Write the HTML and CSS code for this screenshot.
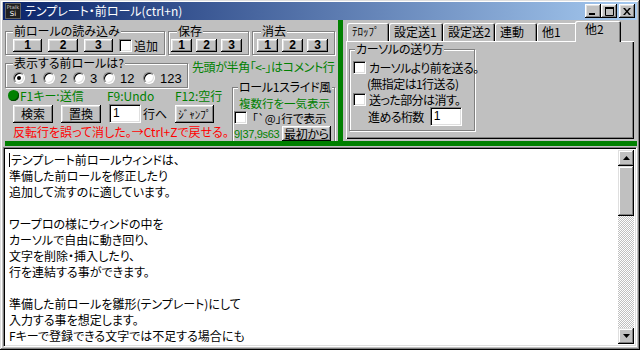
FILE: index.html
```html
<!DOCTYPE html>
<html lang="ja">
<head>
    <meta charset="UTF-8">
    <title>テンプレート・前ロール</title>
    <link rel="stylesheet" href="styles.css">
</head>
<body>
<div class="window">
    <div class="titlebar">
        <div class="app-icon"><span class="ic-top">Ptalk</span><span class="ic-bottom">Si</span></div>
        <span class="title">テンプレート・前ロール(ctrl+n)</span>
        <div class="caption-btns">
            <button class="cap">
                <svg width="8" height="7" viewBox="0 0 8 7"><rect x="0" y="5" width="6" height="2" fill="#000"/></svg>
            </button>
            <button class="cap">
                <svg width="9" height="9" viewBox="0 0 9 9"><path d="M0.5 1.5h8v7h-8z" fill="none" stroke="#000"/><rect x="0" y="0" width="9" height="2" fill="#000"/></svg>
            </button>
            <button class="cap close">
                <svg width="8" height="7" viewBox="0 0 8 7"><path d="M0 0h2l2 2.5 2-2.5h2l-3 3.5 3 3.5h-2l-2-2.5-2 2.5h-2l3-3.5z" fill="#000"/></svg>
            </button>
        </div>
    </div>

    <div class="top">
        <div class="left">
            <div class="row1">
                <fieldset class="group load">
                    <legend>前ロールの読み込み</legend>
                    <div class="ctrl-row">
                        <button class="btn num wide">1</button>
                        <button class="btn num wide">2</button>
                        <button class="btn num wide">3</button>
                        <span class="check"></span>
                        <span class="add-label">追加</span>
                    </div>
                </fieldset>
                <fieldset class="group save">
                    <legend>保存</legend>
                    <div class="ctrl-row small-gap">
                        <button class="btn num narrow">1</button>
                        <button class="btn num narrow">2</button>
                        <button class="btn num narrow">3</button>
                    </div>
                </fieldset>
                <fieldset class="group erase">
                    <legend>消去</legend>
                    <div class="ctrl-row small-gap">
                        <button class="btn num narrow">1</button>
                        <button class="btn num narrow">2</button>
                        <button class="btn num narrow">3</button>
                    </div>
                </fieldset>
            </div>

            <div class="mid">
                <fieldset class="group show">
                    <legend>表示する前ロールは?</legend>
                    <div class="radios">
                        <span class="opt"><span class="radio on"></span>1</span>
                        <span class="opt"><span class="radio"></span>2</span>
                        <span class="opt"><span class="radio"></span>3</span>
                        <span class="opt wide"><span class="radio"></span>12</span>
                        <span class="opt"><span class="radio"></span>123</span>
                    </div>
                </fieldset>
                <p class="note green">先頭が半角「&lt;-」はコメント行</p>

                <fieldset class="group slide">
                    <legend>ロール1スライド風</legend>
                    <p class="green slide-note">複数行を一気表示</p>
                    <div class="slide-check"><span class="check"></span>「`@」行で表示</div>
                    <div class="slide-bottom">
                        <span class="green stamp">9|37,9s63</span>
                        <button class="btn first">最初から</button>
                    </div>
                </fieldset>

                <div class="keys green">
                    <span class="key k1"><span class="dot"></span>F1キー:送信</span>
                    <span class="key k9">F9:Undo</span>
                    <span class="key">F12:空行</span>
                </div>
                <div class="tools">
                    <button class="btn tool">検索</button>
                    <button class="btn tool">置換</button>
                    <span class="field line-no">1</span>
                    <span class="goto">行へ</span>
                    <button class="btn tool jump">ｼﾞｬﾝﾌﾟ</button>
                </div>
                <p class="warn">反転行を誤って消した。→Ctrl+Zで戻せる。</p>
            </div>
        </div>

        <div class="vbar"></div>

        <div class="right">
            <div class="tab-strip">
                <span class="tab t1">ﾃﾛｯﾌﾟ</span>
                <span class="tab t2">設定送1</span>
                <span class="tab t3">設定送2</span>
                <span class="tab t4">連動</span>
                <span class="tab t5">他1</span>
                <span class="tab t6 active">他2</span>
            </div>
            <div class="tab-body">
                <fieldset class="group cursor">
                    <legend>カーソルの送り方</legend>
                    <div class="c-row"><span class="check"></span>カーソルより前を送る。</div>
                    <div class="c-row indent">(無指定は1行送る)</div>
                    <div class="c-row"><span class="check"></span>送った部分は消す。</div>
                    <div class="c-row digits">進める桁数<span class="field digit-box">1</span></div>
                </fieldset>
            </div>
        </div>
    </div>

    <div class="hbar"></div>

    <div class="editor">
        <div class="text"><span class="caret"></span>テンプレート前ロールウィンドは、
準備した前ロールを修正したり
追加して流すのに適しています。

ワープロの様にウィンドの中を
カーソルで自由に動き回り、
文字を削除・挿入したり、
行を連結する事ができます。

準備した前ロールを雛形(テンプレート)にして
入力する事を想定します。
Fキーで登録できる文字では不足する場合にも</div>
        <div class="scrollbar">
            <span class="sb-btn">
                <svg width="7" height="4" viewBox="0 0 7 4"><polygon points="3.5,0 7,4 0,4" fill="#000"/></svg>
            </span>
            <span class="sb-thumb"></span>
            <span class="sb-track"></span>
            <span class="sb-btn">
                <svg width="7" height="4" viewBox="0 0 7 4"><polygon points="0,0 7,0 3.5,4" fill="#000"/></svg>
            </span>
        </div>
    </div>
</div>
</body>
</html>
```

FILE: styles.css
```css
* {
    box-sizing: border-box;
}
body {
    margin: 0;
    background: #c0c0c0;
    font-family: "Noto Sans CJK JP", sans-serif;
    font-size: 12px;
    font-feature-settings: "palt";
    color: #000;
}
p {
    margin: 0;
}
button {
    font: inherit;
    color: #000;
    padding: 0;
    border: 0;
}
.window {
    width: 640px;
    height: 350px;
    padding: 2px 3px 3px 3px;
    background: #c0c0c0;
    display: flex;
    flex-direction: column;
    box-shadow: inset -1px -1px #000, inset 1px 1px #dfdfdf, inset -2px -2px #808080, inset 2px 2px #fff;
}

/* title bar */
.titlebar {
    height: 18px;
    display: flex;
    align-items: center;
    padding: 0 2px;
    background: linear-gradient(90deg, #0a246a, #a6caf0);
    color: #fff;
}
.app-icon {
    width: 16px;
    height: 16px;
    background: #202020;
    border: 1px solid #606060;
    display: flex;
    flex-direction: column;
    align-items: center;
    line-height: 7px;
    font-family: "DejaVu Sans", sans-serif;
    color: #ccc;
}
.ic-top {
    font-size: 5px;
}
.ic-bottom {
    font-size: 7px;
    color: #fff;
}
.title {
    margin-left: 4px;
    line-height: 18px;
}
.caption-btns {
    margin-left: auto;
    display: flex;
}
.cap {
    width: 16px;
    height: 14px;
    background: #c0c0c0;
    display: flex;
    align-items: center;
    justify-content: center;
    box-shadow: inset -1px -1px #000, inset 1px 1px #fff, inset -2px -2px #808080, inset 2px 2px #dfdfdf;
}
.cap.close {
    margin-left: 2px;
}

/* top area */
.top {
    height: 124px;
    display: flex;
    white-space: nowrap;
}
.left {
    width: 335px;
    padding: 5px 0 0 2px;
}
.vbar {
    width: 5px;
    background: #008000;
}
.right {
    flex: 1;
    padding: 0 3px 2px 3px;
    display: flex;
    flex-direction: column;
}
.hbar {
    height: 5px;
    margin-left: 2px;
    background: #008000;
}

/* group boxes */
.group {
    margin: 0;
    min-width: 0;
    padding: 0 6px 2px 7px;
    border: 1px solid #808080;
    box-shadow: inset 1px 1px #fff, 1px 1px #fff;
}
.group legend {
    padding: 0 1px;
    line-height: 12px;
    background: #c0c0c0;
}
.row1 {
    display: flex;
    gap: 3px;
}
.load {
    width: 160px;
}
.save {
    width: 81px;
    padding-left: 2px;
}
.save legend {
    margin-left: 6px;
}
.erase {
    width: 83px;
    padding-left: 4px;
}
.erase legend {
    margin-left: 4px;
}
.ctrl-row {
    display: flex;
    align-items: center;
    gap: 6px;
    height: 14px;
    margin-top: 1px;
}
.ctrl-row.small-gap {
    gap: 4px;
}
.add-label {
    margin-left: -4px;
}

/* controls */
.btn {
    background: #c0c0c0;
    box-shadow: inset -1px -1px #000, inset 1px 1px #fff, inset -2px -2px #808080, inset 2px 2px #dfdfdf;
}
.btn.num {
    height: 13px;
    font-family: "Liberation Sans", sans-serif;
    font-weight: bold;
    font-size: 12px;
    line-height: 13px;
}
.btn.wide {
    width: 30px;
}
.btn.narrow {
    width: 21px;
}
.check {
    display: inline-block;
    flex: none;
    width: 13px;
    height: 13px;
    background: #fff;
    border: 1px solid;
    border-color: #808080 #fff #fff #808080;
    box-shadow: inset 1px 1px #000, inset -1px -1px #dfdfdf;
}
.radio {
    flex: none;
    width: 12px;
    height: 12px;
    border-radius: 50%;
    background: #fff;
    border: 1px solid;
    border-color: #808080 #fff #fff #808080;
    box-shadow: inset 1px 1px #000, inset -1px -1px #dfdfdf;
    display: flex;
    align-items: center;
    justify-content: center;
}
.radio.on::after {
    content: '';
    width: 4px;
    height: 4px;
    border-radius: 50%;
    background: #000;
}
.field {
    background: #fff;
    border: 1px solid;
    border-color: #808080 #fff #fff #808080;
    box-shadow: inset 1px 1px #000, inset -1px -1px #dfdfdf;
    padding-left: 3px;
    line-height: 17px;
    font-family: "Liberation Sans", sans-serif;
}
.green {
    color: #008000;
}

/* middle grid */
.mid {
    margin-top: 2px;
    display: grid;
    grid-template-columns: 187px 40px 103px;
    grid-template-rows: 24px 7px 15px 21px 15px;
}
.show {
    grid-column: 1;
    grid-row: 1 / 3;
    width: 183px;
    padding-left: 7px;
}
.radios {
    display: flex;
    align-items: center;
    height: 16px;
    margin-top: 1px;
}
.opt {
    display: flex;
    align-items: center;
    gap: 5px;
    width: 30px;
    font-family: "Liberation Sans", sans-serif;
    font-size: 13px;
}
.opt.wide {
    width: 40px;
}
.note {
    grid-column: 1 / 4;
    grid-row: 1;
    margin-left: 187px;
    padding-top: 2px;
    line-height: 16px;
    letter-spacing: -0.4px;
}
.slide {
    grid-column: 3;
    grid-row: 2 / 6;
    width: 103px;
    height: 63px;
    padding: 0 2px 2px 1px;
    line-height: 14px;
}
.slide legend {
    margin-left: 4px;
    letter-spacing: -0.3px;
}
.slide-note {
    font-size: 11.5px;
    line-height: 14px;
    padding: 3px 0 0 5px;
}
.slide-check {
    display: flex;
    align-items: center;
    gap: 5px;
    height: 15px;
    font-size: 11.5px;
}
.slide-bottom {
    display: flex;
    align-items: center;
    height: 15px;
    margin-top: 1px;
}
.stamp {
    font-family: "Liberation Sans", sans-serif;
    font-size: 11px;
    width: 48px;
    letter-spacing: -0.3px;
}
.btn.first {
    height: 15px;
    width: 49px;
    line-height: 14px;
    letter-spacing: -0.3px;
}
.keys {
    grid-column: 1 / 3;
    grid-row: 3;
    display: flex;
    align-items: center;
    padding-left: 3px;
    line-height: 15px;
}
.key.k1 {
    width: 99px;
    display: flex;
    align-items: center;
    gap: 1px;
}
.key.k9 {
    width: 68px;
}
.dot {
    width: 11px;
    height: 11px;
    border-radius: 50%;
    background: #008000;
    box-shadow: inset -1px -1px #004000;
}
.tools {
    grid-column: 1 / 3;
    grid-row: 4;
    display: flex;
    align-items: center;
    padding-left: 8px;
}
.btn.tool {
    width: 40px;
    height: 18px;
    margin-right: 8px;
}
.line-no {
    width: 32px;
    height: 19px;
}
.goto {
    margin: 0 8px 0 2px;
}
.btn.jump {
    width: 39px;
    margin-right: 0;
    font-size: 11px;
}
.warn {
    grid-column: 1 / 3;
    grid-row: 5;
    padding-left: 8px;
    color: #f00;
    line-height: 15px;
}

/* tabs */
.tab-strip {
    height: 21px;
    display: flex;
    align-items: flex-end;
    padding-left: 1px;
}
.tab {
    height: 18px;
    line-height: 17px;
    padding-left: 5px;
    border-radius: 2px 2px 0 0;
    box-shadow: inset 1px 1px #fff, inset -1px 0 #000, inset -2px 0 #808080;
}
.t1 { width: 42px; font-size: 11px; }
.t2 { width: 54px; }
.t3 { width: 52px; }
.t4 { width: 42px; }
.t5 { width: 40px; }
.t6 { width: 44px; }
.tab.active {
    position: relative;
    z-index: 1;
    height: 21px;
    width: 46px;
    margin: 0 0 -1px -2px;
    padding-left: 10px;
    line-height: 16px;
    background: #c0c0c0;
}
.tab-body {
    flex: 1;
    padding: 2px 0 0 3px;
    box-shadow: inset 1px 1px #fff, inset -1px -1px #000, inset -2px -2px #808080;
}
.cursor {
    width: 126px;
    padding: 0 3px 4px 3px;
    letter-spacing: -0.6px;
}
.cursor legend {
    margin-left: 2px;
    letter-spacing: -0.3px;
}
.c-row {
    height: 16px;
    display: flex;
    align-items: center;
    gap: 3px;
}
.c-row:first-of-type {
    margin-top: 4px;
}
.c-row.indent {
    padding-left: 14px;
}
.c-row.digits {
    height: 19px;
    padding-left: 15px;
    gap: 6px;
}
.digit-box {
    width: 32px;
    height: 19px;
}

/* editor */
.editor {
    flex: 1;
    margin-top: 1px;
    display: flex;
    background: #fff;
    border: 1px solid;
    border-color: #808080 #fff #fff #808080;
    box-shadow: inset 1px 1px #000, inset -1px -1px #dfdfdf;
    padding: 2px;
}
.text {
    flex: 1;
    white-space: pre;
    line-height: 16px;
    padding: 2px 0 0 3px;
    overflow: hidden;
}
.caret {
    display: inline-block;
    width: 1px;
    height: 14px;
    background: #000;
    vertical-align: -2px;
    margin-right: 1px;
}
.scrollbar {
    width: 16px;
    display: flex;
    flex-direction: column;
}
.sb-btn {
    height: 16px;
    flex: none;
    display: flex;
    align-items: center;
    justify-content: center;
    background: #c0c0c0;
    box-shadow: inset -1px -1px #000, inset 1px 1px #dfdfdf, inset -2px -2px #808080, inset 2px 2px #fff;
}
.sb-thumb {
    height: 50px;
    flex: none;
    background: #c0c0c0;
    box-shadow: inset -1px -1px #000, inset 1px 1px #dfdfdf, inset -2px -2px #808080, inset 2px 2px #fff;
}
.sb-track {
    flex: 1;
    background: repeating-conic-gradient(#c0c0c0 0 25%, #fff 0 50%) 0 0 / 2px 2px;
}
```
